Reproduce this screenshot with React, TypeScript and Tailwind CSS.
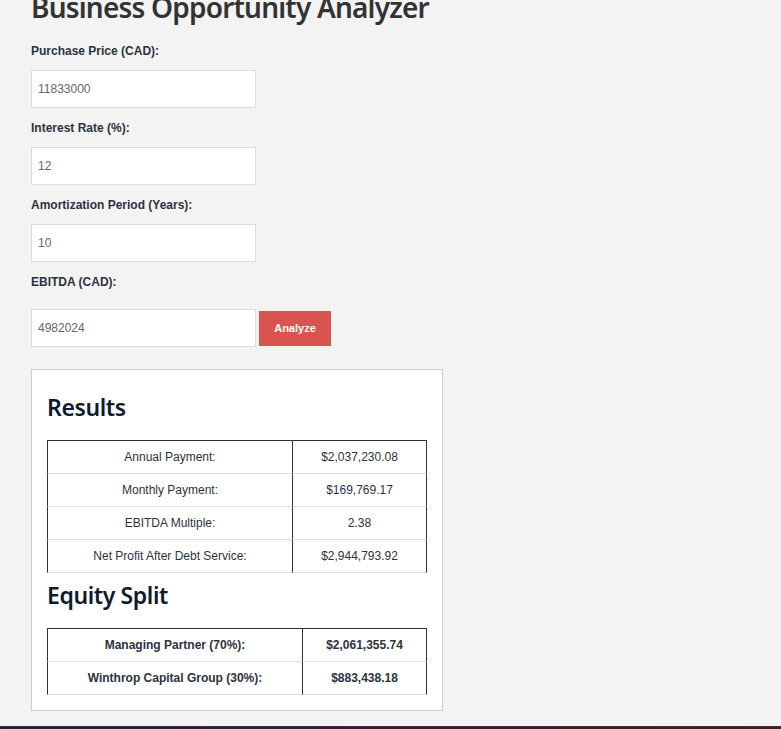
const labelCls = 'block text-[12px] leading-[14px] font-bold text-[#2b3340]'
const inputCls =
  'block w-[225px] h-[38px] border border-[#dcdcdc] bg-white px-[6px] text-[12px] text-[#666] outline-none'
const headCls = "text-[23px] leading-[32px] font-semibold tracking-[-0.4px] text-[#0d1b2e] font-['Noto_Sans',sans-serif]"

type Field = { label: string; value: string }

const fields: Field[] = [
  { label: 'Purchase Price (CAD):', value: '11833000' },
  { label: 'Interest Rate (%):', value: '12' },
  { label: 'Amortization Period (Years):', value: '10' },
]

const results = [
  ['Annual Payment:', '$2,037,230.08'],
  ['Monthly Payment:', '$169,769.17'],
  ['EBITDA Multiple:', '2.38'],
  ['Net Profit After Debt Service:', '$2,944,793.92'],
]

const equity = [
  ['Managing Partner (70%):', '$2,061,355.74'],
  ['Winthrop Capital Group (30%):', '$883,438.18'],
]

function DataTable({ rows, firstWidth, bold }: { rows: string[][]; firstWidth: string; bold?: boolean }) {
  return (
    <table className="w-[380px] border-separate border-spacing-0 border-t border-[#333] text-[12px] text-[#2b3340]">
      <tbody>
        {rows.map(([k, v]) => (
          <tr key={k}>
            <td
              className={`${firstWidth} h-[33px] border-l border-r border-b border-l-[#333] border-r-[#333] border-b-[#ddd] text-center ${bold ? 'font-bold' : ''}`}
            >
              {k}
            </td>
            <td
              className={`h-[33px] border-r border-b border-r-[#333] border-b-[#ddd] text-center ${bold ? 'font-bold' : ''}`}
            >
              {v}
            </td>
          </tr>
        ))}
      </tbody>
    </table>
  )
}

export default function App() {
  return (
    <div className="min-h-screen bg-[#f3f3f3] font-['Liberation_Sans',Arial,sans-serif] overflow-hidden">
      <div className="px-[31px]">
        <h1 className="mt-[-12px] mb-[18px] text-[28px] leading-[38px] font-semibold tracking-[-0.8px] text-[#333] font-['Noto_Sans',sans-serif]">
          Business Opportunity Analyzer
        </h1>

        {fields.map((f) => (
          <div key={f.label} className="mb-[13px]">
            <label className={`${labelCls} mb-[12px]`}>{f.label}</label>
            <input className={inputCls} defaultValue={f.value} />
          </div>
        ))}

        <div>
          <label className={`${labelCls} mb-[20px]`}>EBITDA (CAD):</label>
          <div className="flex items-center gap-[3px]">
            <input className={inputCls} defaultValue="4982024" />
            <button className="h-[35px] w-[72px] bg-[#d9534f] text-[11px] font-bold text-white">Analyze</button>
          </div>
        </div>

        <div className="mt-[22px] mb-[15px] w-[412px] border border-[#ccc] bg-white px-[15px] pt-[15px] pb-[15px]">
          <h2 className={`mt-[6px] mb-[17px] ${headCls}`}>Results</h2>
          <DataTable rows={results} firstWidth="w-[246px]" />
          <h2 className={`mt-[6px] mb-[17px] ${headCls}`}>Equity Split</h2>
          <DataTable rows={equity} firstWidth="w-[256px]" bold />
        </div>
      </div>
      <div className="h-[40px] border-t border-[#3d2c44] bg-gradient-to-r from-[#2b1d33] to-[#471b22]" />
    </div>
  )
}
